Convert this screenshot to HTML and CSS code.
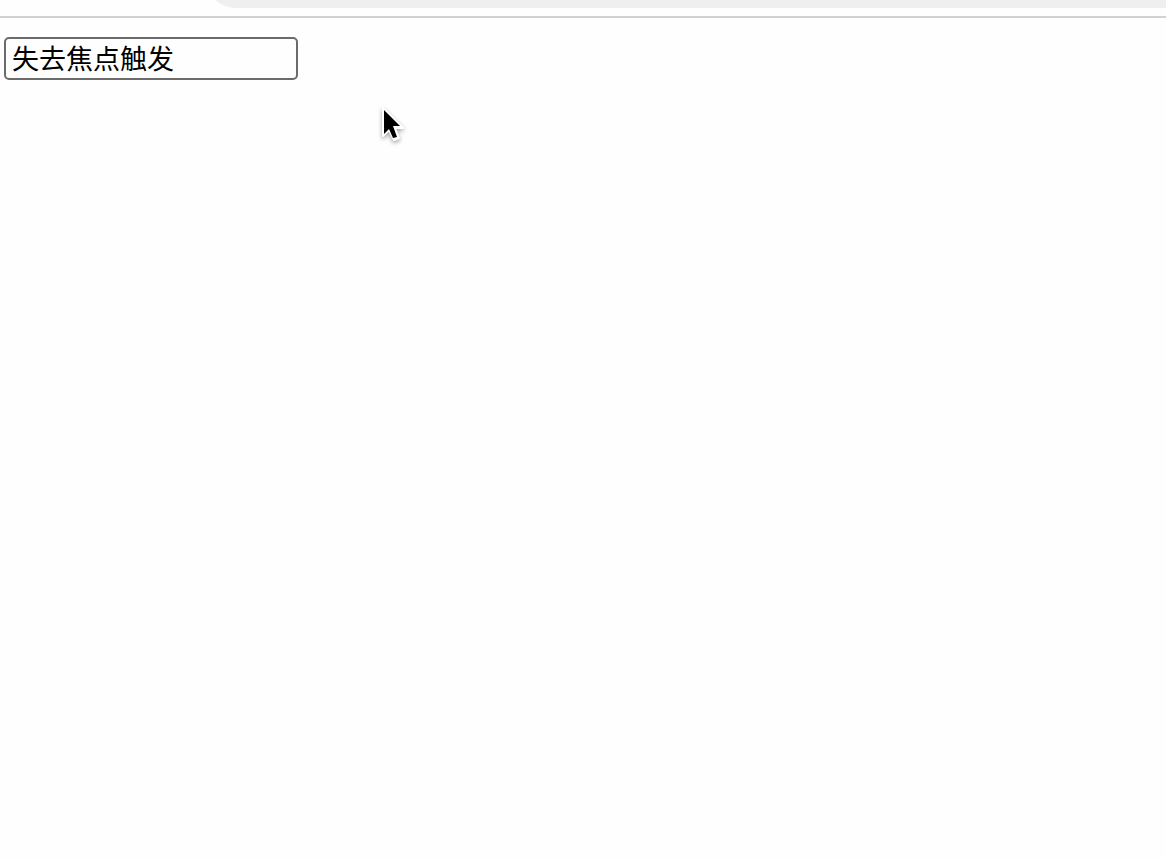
FILE: index.html
```html
<!DOCTYPE html>
<html lang="zh-CN">
<head>
    <meta charset="UTF-8">
    <meta name="viewport" content="width=device-width, initial-scale=1.0">
    <title>onblur</title>
    <link rel="stylesheet" href="styles.css">
</head>
<body>
    <header class="toolbar">
        <div class="address-bar"></div>
    </header>

    <main class="content">
        <input class="text-input" type="text" value="失去焦点触发" aria-label="失去焦点触发">
    </main>

    <!-- 鼠标指针 -->
    <svg class="cursor" width="32" height="42" viewBox="0 0 32 42" aria-hidden="true">
        <path d="M5 4 V32 L11 26 L16 36 L21 34 L17 24 H25 Z" fill="#fff" stroke="#fff" stroke-width="2" stroke-linejoin="round"/>
        <path d="M6 6 V30 L11 25 L15 34 L19 33 L15 22 H22 Z" fill="#000"/>
    </svg>
</body>
</html>
```

FILE: styles.css
```css
body {
    margin: 0;
    background-color: #fefefe;
    font-family: "Liberation Sans", "Noto Sans CJK SC", sans-serif;
}

.toolbar {
    height: 16px;
    overflow: hidden;
    border-bottom: 2px solid #d2d2d2;
}

.address-bar {
    height: 56px;
    margin-top: -48px;
    margin-left: 207px;
    background-color: #efefef;
    border-radius: 28px 0 0 28px;
}

.content {
    padding: 19px 4px;
}

.text-input {
    display: block;
    box-sizing: border-box;
    width: 294px;
    height: 43px;
    padding: 0 6px 2px;
    border: 2px solid #6b6b6b;
    border-radius: 5px;
    background-color: #fefefe;
    color: #000;
    font-family: inherit;
    font-size: 27px;
}

.cursor {
    position: absolute;
    top: 104px;
    left: 378px;
    filter: drop-shadow(0 2px 2px rgba(0, 0, 0, 0.35));
}
```
